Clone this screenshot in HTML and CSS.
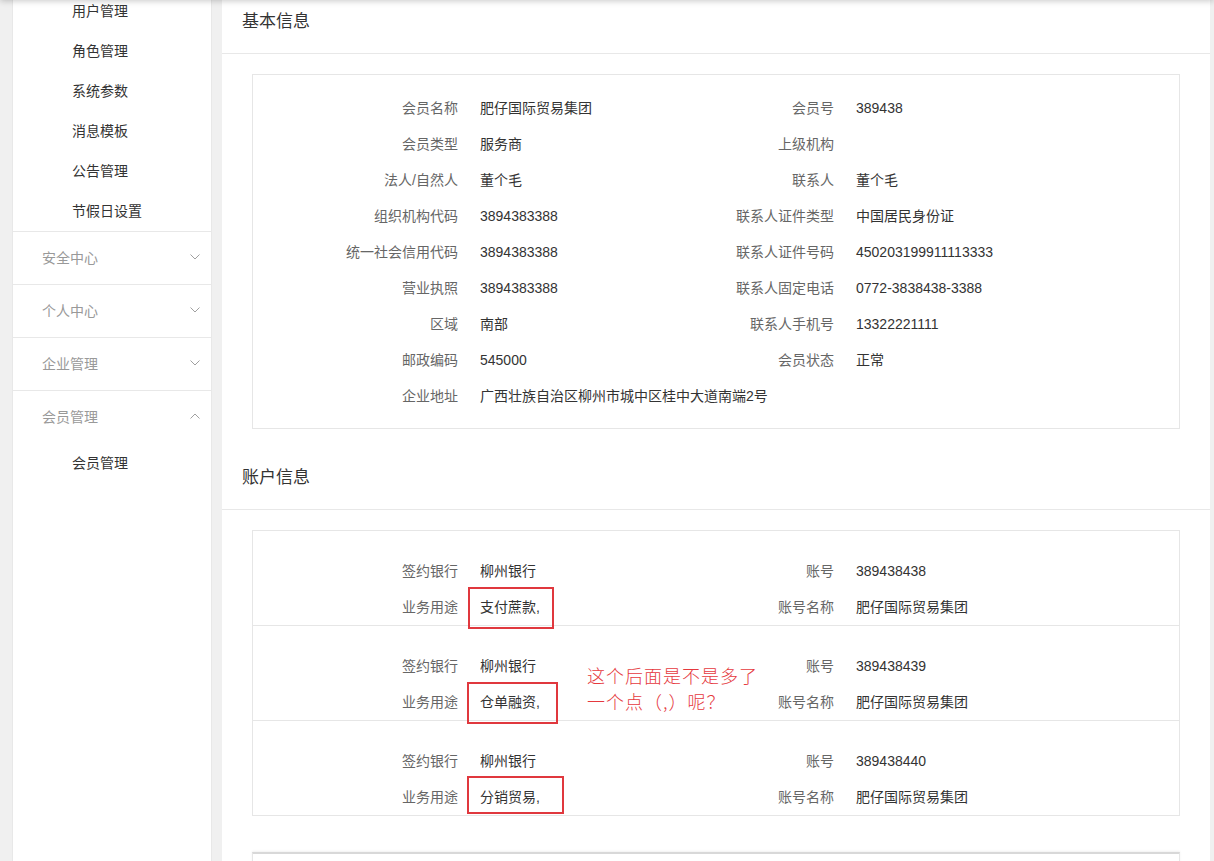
FILE: index.html
```html
<!DOCTYPE html>
<html lang="zh-CN">
<head>
<meta charset="utf-8">
<title>会员详情</title>
<link rel="stylesheet" href="styles.css">
</head>
<body>
<div class="topshade"></div>
<aside class="sidebar">
  <ul class="submenu first">
    <li>用户管理</li>
    <li>角色管理</li>
    <li>系统参数</li>
    <li>消息模板</li>
    <li>公告管理</li>
    <li>节假日设置</li>
  </ul>
  <div class="group">
    <div class="group-head"><span>安全中心</span><svg class="chev" width="10" height="6" viewBox="0 0 10 6"><polyline points="0.5,0.5 5,5 9.5,0.5" fill="none" stroke="#a0a0a0" stroke-width="1"/></svg></div>
  </div>
  <div class="group">
    <div class="group-head"><span>个人中心</span><svg class="chev" width="10" height="6" viewBox="0 0 10 6"><polyline points="0.5,0.5 5,5 9.5,0.5" fill="none" stroke="#a0a0a0" stroke-width="1"/></svg></div>
  </div>
  <div class="group">
    <div class="group-head"><span>企业管理</span><svg class="chev" width="10" height="6" viewBox="0 0 10 6"><polyline points="0.5,0.5 5,5 9.5,0.5" fill="none" stroke="#a0a0a0" stroke-width="1"/></svg></div>
  </div>
  <div class="group open">
    <div class="group-head"><span>会员管理</span><svg class="chev" width="10" height="6" viewBox="0 0 10 6"><polyline points="0.5,5.5 5,1 9.5,5.5" fill="none" stroke="#a0a0a0" stroke-width="1"/></svg></div>
    <ul class="submenu">
      <li>会员管理</li>
    </ul>
  </div>
</aside>

<main class="main">
  <div class="scroller">
    <h2 class="sec-title">基本信息</h2>
    <div class="box info">
      <div class="grid">
        <div class="lbl">会员名称</div><div class="val">肥仔国际贸易集团</div><div class="lbl">会员号</div><div class="val">389438</div>
        <div class="lbl">会员类型</div><div class="val">服务商</div><div class="lbl">上级机构</div><div class="val"></div>
        <div class="lbl">法人/自然人</div><div class="val">董个毛</div><div class="lbl">联系人</div><div class="val">董个毛</div>
        <div class="lbl">组织机构代码</div><div class="val">3894383388</div><div class="lbl">联系人证件类型</div><div class="val">中国居民身份证</div>
        <div class="lbl">统一社会信用代码</div><div class="val">3894383388</div><div class="lbl">联系人证件号码</div><div class="val">450203199911113333</div>
        <div class="lbl">营业执照</div><div class="val">3894383388</div><div class="lbl">联系人固定电话</div><div class="val">0772-3838438-3388</div>
        <div class="lbl">区域</div><div class="val">南部</div><div class="lbl">联系人手机号</div><div class="val">13322221111</div>
        <div class="lbl">邮政编码</div><div class="val">545000</div><div class="lbl">会员状态</div><div class="val">正常</div>
        <div class="lbl">企业地址</div><div class="val wide">广西壮族自治区柳州市城中区桂中大道南端2号</div>
      </div>
    </div>

    <h2 class="sec-title">账户信息</h2>
    <div class="box accounts">
      <div class="grid acct">
        <div class="lbl">签约银行</div><div class="val">柳州银行</div><div class="lbl">账号</div><div class="val">389438438</div>
        <div class="lbl">业务用途</div><div class="val">支付蔗款,<span class="mark m1"></span></div><div class="lbl">账号名称</div><div class="val">肥仔国际贸易集团</div>
      </div>
      <div class="grid acct">
        <div class="lbl">签约银行</div><div class="val">柳州银行</div><div class="lbl">账号</div><div class="val">389438439</div>
        <div class="lbl">业务用途</div><div class="val">仓单融资,<span class="mark m2"></span></div><div class="lbl">账号名称</div><div class="val">肥仔国际贸易集团</div>
      </div>
      <div class="grid acct">
        <div class="lbl">签约银行</div><div class="val">柳州银行</div><div class="lbl">账号</div><div class="val">389438440</div>
        <div class="lbl">业务用途</div><div class="val">分销贸易,<span class="mark m3"></span></div><div class="lbl">账号名称</div><div class="val">肥仔国际贸易集团</div>
      </div>
      <div class="note">这个后面是不是多了<br>一个点（,）呢？</div>
    </div>

    <div class="box next"></div>
  </div>
</main>
</body>
</html>
```

FILE: styles.css
```css
* { box-sizing: border-box; }
html, body { height: 100%; overflow: hidden; }
body {
  margin: 0;
  background: #f0f0f0;
  font-family: "Liberation Sans", "Noto Sans CJK SC", sans-serif;
  font-size: 14px;
  color: #333;
  display: flex;
  align-items: stretch;
}
ul { list-style: none; margin: 0; padding: 0; }

.topshade {
  position: fixed;
  left: 0; right: 0; top: -10px;
  height: 10px;
  box-shadow: 0 1px 6px rgba(0,0,0,0.22);
  z-index: 5;
}

/* sidebar */
.sidebar {
  margin-left: 12px;
  width: 200px;
  height: 100%;
  background: #fff;
  border-left: 1px solid #e8e8e8;
  border-right: 1px solid #e8e8e8;
  flex: none;
}
.submenu li {
  height: 40px;
  line-height: 40px;
  padding-left: 59px;
  color: #333;
}
.submenu.first { margin-top: -9px; }
.group { border-top: 1px solid #e8e8e8; }
.group-head {
  height: 52px;
  display: flex;
  align-items: center;
  justify-content: space-between;
  padding: 0 11px 2px 29px;
  color: #999;
}
.chev { display: block; }

/* main */
.main {
  margin-left: 10px;
  width: 988px;
  height: 100%;
  background: #fff;
  flex: none;
}
.scroller { margin-top: -27px; }
.sec-title {
  margin: 0;
  font-weight: normal;
  font-size: 17px;
  line-height: 22px;
  padding: 38px 20px 20px;
  color: #333;
  border-bottom: 1px solid #e8e8e8;
}
.box {
  margin: 20px 30px 0;
  border: 1px solid #e6e6e6;
  background: #fff;
}
.info { padding: 15px 0 14px; }

.grid {
  display: grid;
  grid-template-columns: 205px 260px 116px 1fr;
}
.lbl {
  text-align: right;
  color: #666;
  line-height: 36px;
  height: 36px;
  white-space: nowrap;
}
.val {
  line-height: 36px;
  height: 36px;
  padding-left: 22px;
  white-space: nowrap;
  color: #333;
}
.val.wide { grid-column: 2 / 5; }

.accounts { position: relative; }
.acct { padding: 22px 0 0; }
.acct + .acct { border-top: 1px solid #e6e6e6; }
.acct .val { position: relative; }

.mark {
  position: absolute;
  border: 2px solid #e0383e;
}
.m1 { left: 10px; top: -2px; width: 86px; height: 42px; }
.m2 { left: 9px; top: -2px; width: 91px; height: 42px; }
.m3 { left: 9px; top: -3px; width: 97px; height: 38px; }

.note {
  position: absolute;
  left: 334px;
  top: 131px;
  font-family: "Noto Sans CJK SC", sans-serif;
  font-size: 18px;
  line-height: 26px;
  letter-spacing: 1px;
  color: #e5393e;
  font-weight: 300;
}

.next {
  margin-top: 36px;
  height: 60px;
  border-top: 2px solid #d8d8d8;
  box-shadow: 0 -1px 2px rgba(0,0,0,0.06);
}
```
